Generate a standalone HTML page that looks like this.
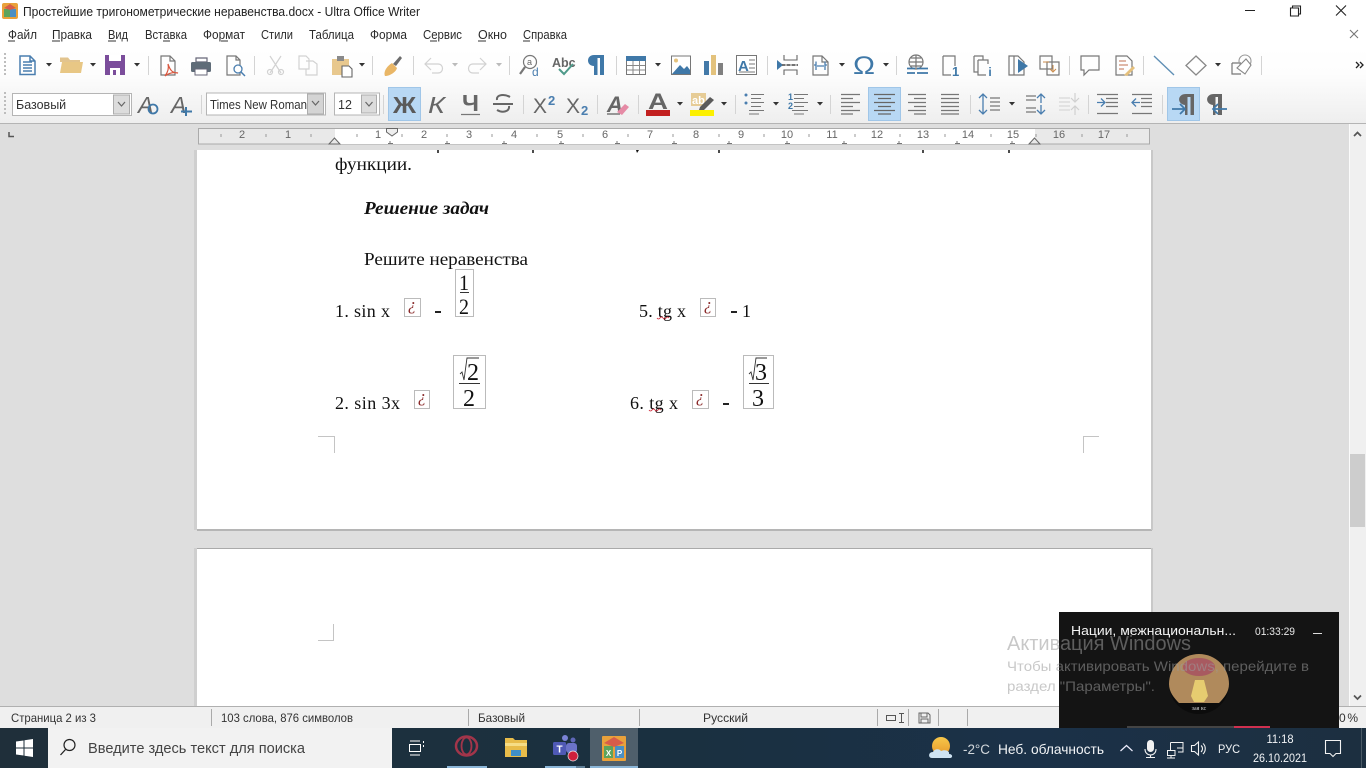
<!DOCTYPE html>
<html lang="ru"><head><meta charset="utf-8"><title>Ultra Office Writer</title>
<style>
html,body{margin:0;padding:0;width:1366px;height:768px;overflow:hidden;background:#dfdfdf}
svg{display:block;position:absolute;left:0;top:0}
text{font-family:"Liberation Sans",sans-serif;white-space:pre}
.m{font-size:12.5px;fill:#2b2b2b}
.d{font-family:"Liberation Serif",serif;font-size:18px;fill:#111}
.r{font-size:11px;fill:#666;text-anchor:middle}
.s{font-size:12px;fill:#333}
.t{fill:#f2f4f6}
.ln{stroke:#6a6a6a;fill:none;stroke-width:1.3}
.bl{stroke:#4a7eaf;fill:none;stroke-width:1.5}
.lt{stroke:#d2d2d2;fill:none;stroke-width:1.2}
.g{stroke:#777;fill:none;stroke-width:1.2}
.sep{stroke:#d4d4d4;stroke-width:1}
.ar{fill:#333}
.q{font-family:"Liberation Serif",serif;font-size:17px;font-style:italic;fill:#8a2a2a;text-anchor:middle}
</style></head><body>
<svg width="1366" height="768" viewBox="0 0 1366 768" xmlns="http://www.w3.org/2000/svg">
<defs>
<linearGradient id="tb" x1="0" y1="0" x2="0" y2="1"><stop offset="0" stop-color="#fff"/><stop offset=".35" stop-color="#fdfdfd"/><stop offset="1" stop-color="#eeeeee"/></linearGradient>
<linearGradient id="task" x1="0" y1="0" x2="1" y2="0"><stop offset="0" stop-color="#1f2f3a"/><stop offset=".5" stop-color="#1a3040"/><stop offset=".75" stop-color="#1b3148"/><stop offset="1" stop-color="#1c2f40"/></linearGradient>
<linearGradient id="sun" x1="0" y1="0" x2="0" y2="1"><stop offset="0" stop-color="#f7c74a"/><stop offset="1" stop-color="#e89a2c"/></linearGradient>
</defs>

<!-- window background -->
<rect x="0" y="0" width="1366" height="48" fill="#fff"/>
<rect x="0" y="48" width="1366" height="75" fill="url(#tb)"/>
<rect x="0" y="123" width="1366" height="1" fill="#b4b4b4"/>
<rect x="0" y="124" width="1349" height="583" fill="#dedede"/>

<!-- title bar -->
<g>
<rect x="2" y="3" width="16" height="16" rx="2" fill="#e9a13b"/>
<rect x="4" y="9" width="6" height="8" fill="#5ca35c"/>
<rect x="10" y="9" width="6" height="8" fill="#4a8fc4"/>
<path d="M4 8 L10 4 L16 8 L10 10Z" fill="#d65c4a"/>
</g>
<text x="23" y="16" font-size="13" fill="#222" textLength="397" lengthAdjust="spacingAndGlyphs">Простейшие тригонометрические неравенства.docx - Ultra Office Writer</text>
<path d="M1245 10.500H1255" stroke="#222" stroke-width="1"/>
<path d="M1290.500 8h8v8h-8zM1292.500 8v-2h8v8h-2" fill="none" stroke="#222" stroke-width="1.100"/>
<path d="M1336 5.500L1346 15.500M1346 5.500L1336 15.500" stroke="#222" stroke-width="1.100"/>

<!-- menu -->
<text class="m" x="8" y="39" textLength="29" lengthAdjust="spacingAndGlyphs">Файл</text><path d="M8 41h7" stroke="#333"/>
<text class="m" x="52" y="39" textLength="40" lengthAdjust="spacingAndGlyphs">Правка</text><path d="M52 41h8" stroke="#333"/>
<text class="m" x="108" y="39" textLength="20" lengthAdjust="spacingAndGlyphs">Вид</text><path d="M108 41h8" stroke="#333"/>
<text class="m" x="145" y="39" textLength="42" lengthAdjust="spacingAndGlyphs">Вставка</text><path d="M163 41h7" stroke="#333"/>
<text class="m" x="203" y="39" textLength="42" lengthAdjust="spacingAndGlyphs">Формат</text><path d="M221 41h7" stroke="#333"/>
<text class="m" x="261" y="39" textLength="32" lengthAdjust="spacingAndGlyphs">Стили</text>
<text class="m" x="309" y="39" textLength="45" lengthAdjust="spacingAndGlyphs">Таблица</text>
<text class="m" x="370" y="39" textLength="37" lengthAdjust="spacingAndGlyphs">Форма</text>
<text class="m" x="423" y="39" textLength="39" lengthAdjust="spacingAndGlyphs">Сервис</text><path d="M430 41h7" stroke="#333"/>
<text class="m" x="478" y="39" textLength="29" lengthAdjust="spacingAndGlyphs">Окно</text><path d="M478 41h8" stroke="#333"/>
<text class="m" x="523" y="39" textLength="44" lengthAdjust="spacingAndGlyphs">Справка</text><path d="M523 41h7" stroke="#333"/>
<path d="M1350 30L1358 38M1358 30L1350 38" stroke="#777" stroke-width="1.100"/>

<!-- toolbar 1 -->
<g fill="#bdbdbd"><rect x="4" y="53" width="2" height="2"/><rect x="4" y="57" width="2" height="2"/><rect x="4" y="61" width="2" height="2"/><rect x="4" y="65" width="2" height="2"/><rect x="4" y="69" width="2" height="2"/><rect x="4" y="73" width="2" height="2"/>
<rect x="4" y="92" width="2" height="2"/><rect x="4" y="96" width="2" height="2"/><rect x="4" y="100" width="2" height="2"/><rect x="4" y="104" width="2" height="2"/><rect x="4" y="108" width="2" height="2"/><rect x="4" y="112" width="2" height="2"/></g>
<path class="bl" d="M20 56H30L35 61V74.500H20ZM30 56V61H35M23 62H32M23 65H32M23 68H32M23 71H32" stroke-width="1.100"/>
<path class="ar" d="M46 63h6l-3 3.500z"/>
<path d="M60 62V57.500H68L70 60H80V62Z" fill="#e2c48e"/><path d="M60 73L62 62H83L81 73Z" fill="#e8c785"/>
<path class="ar" d="M90 63h6l-3 3.500z"/>
<path d="M105 55H125V75H105Z" fill="#7b4d9b"/><rect x="109" y="55" width="12" height="6" fill="#fff"/><rect x="110" y="68" width="10" height="7" fill="#fff"/><rect x="113" y="70" width="3" height="5" fill="#7b4d9b"/>
<path class="ar" d="M134 63h6l-3 3.500z"/>
<path class="sep" d="M148.500 56V75"/>
<path d="M161 56H170L175 61V75H161ZM170 56V61H175" fill="none" stroke="#777" stroke-width="1.200"/>
<path d="M168 64C170 70 172 73 178 73C174 72 169 73 165 76C168 72 169 68 168 64Z" fill="none" stroke="#d9573f" stroke-width="1.200"/>
<path d="M196 58H207V62H196Z" fill="#fff" stroke="#667" stroke-width="1.200"/><rect x="191" y="62" width="20" height="10" rx="1.500" fill="#5f6c78"/><rect x="195" y="69" width="12" height="6" fill="#fff" stroke="#667"/>
<path d="M227 56H236L240 60V75H227ZM236 56V60H240" class="g"/><circle cx="238" cy="69" r="4" fill="#fff" stroke="#4a7eaf" stroke-width="1.300"/><path d="M241 72L245 76" stroke="#4a7eaf" stroke-width="1.500"/>
<path class="sep" d="M254.500 56V75"/>
<path class="lt" d="M270 56L281 73M281 56L270 73"/><circle cx="270" cy="72" r="2.500" class="lt"/><circle cx="281" cy="72" r="2.500" class="lt"/>
<path class="lt" d="M299 56H306L309 59V69H299ZM306 61H313L317 64V75H306V69"/>
<path d="M332 59H349V75H332Z" fill="#e8c88e"/><rect x="337" y="56" width="7" height="5" fill="#8a8a8a"/><path d="M342 66H349L352 69V77H342Z" fill="#fff" stroke="#666" stroke-width="1.100"/>
<path class="ar" d="M359 63h6l-3 3.500z"/>
<path class="sep" d="M372.500 56V75"/>
<path d="M393 64L400 56L402 58L396 66Z" fill="#6c6c6c"/><path d="M385 76C383 72 387 66 392 63L397 68C396 72 390 76 385 76Z" fill="#e9b666"/>
<path class="sep" d="M413.500 56V75"/>
<path class="lt" d="M431 58L425 64L431 70M425 64H438C444 64 444 73 438 73H432" stroke-width="1.500"/>
<path d="M452 63h6l-3 3.500z" fill="#bbb"/>
<path class="lt" d="M480 58L486 64L480 70M486 64H473C467 64 467 73 473 73H479" stroke-width="1.500"/>
<path d="M496 63h6l-3 3.500z" fill="#bbb"/>
<path class="sep" d="M509.500 56V75"/>
<circle cx="530" cy="62" r="6.500" class="g"/><path d="M525 67L520 74" stroke="#777" stroke-width="2.200"/><text x="527" y="65" font-size="9" fill="#666">a</text><text x="532" y="76" font-size="12" fill="#4a7eaf">d</text>
<text x="552" y="67" font-size="12.500" font-weight="bold" fill="#666">Abc</text><path d="M559 69L564 74L573 64" fill="none" stroke="#4f9a8a" stroke-width="2"/>
<path d="M604 55H594C586 55 586 66 594 66V75H597.500V58H600V75H604Z" fill="#3f78a8"/>
<path class="sep" d="M616.500 56V75"/>
<g><rect x="626.500" y="56.500" width="19" height="18" fill="#fff" stroke="#777"/><rect x="626" y="56" width="20" height="5" fill="#3f78a8"/><path d="M633 61V74M639.500 61V74M627 65.500H645M627 70H645" stroke="#888"/></g>
<path class="ar" d="M655 63h6l-3 3.500z"/>
<g><rect x="671.500" y="56" width="19" height="18.500" fill="#fff" stroke="#777"/><path d="M672 74L680 65L684 69L687 66L690 70V74Z" fill="#3f78a8"/><circle cx="676" cy="60.500" r="2" fill="#e5c27c"/></g>
<rect x="704" y="61" width="5" height="14" fill="#4379a8"/><rect x="711" y="55" width="5" height="20" fill="#e3c27c"/><rect x="718" y="63" width="5" height="12" fill="#808080"/>
<rect x="736.500" y="55.500" width="20" height="19" fill="#fff" stroke="#777"/><text x="738" y="71" font-size="15" font-weight="bold" fill="#3f78a8">A</text><path d="M749 60H755M749 64H755M749 68H755M739 72H755" stroke="#777"/>
<path class="sep" d="M767.500 56V75"/>
<path d="M777 60L783 65L777 70Z" fill="#3f78a8"/><path d="M784 55V60H797V55M784 75V70H797V75M784 65H797" fill="none" stroke="#666" stroke-width="1.100"/><path d="M782 65H798" stroke="#444" stroke-dasharray="3 2" stroke-width="1.500"/>
<path class="g" d="M813 56H822L828 62V75H813ZM822 56V62H828"/><path d="M814 65H816M825 65H827M816 61.500V70M825 61.500V70M817 66H824" stroke="#4a7eaf" fill="none" stroke-width="1.300"/>
<path class="ar" d="M839 63h6l-3 3.500z"/>
<text x="853" y="74" font-size="25" fill="#3f78a8" textLength="22" lengthAdjust="spacingAndGlyphs">Ω</text>
<path class="ar" d="M883 63h6l-3 3.500z"/>
<path class="sep" d="M896.500 56V75"/>
<g class="g"><circle cx="916" cy="62" r="7" class="g"/><path class="g" d="M909 62H923M916 55V69M911 58H921M911 66H921" stroke-width=".9"/></g><path d="M907 68.500H915M917 68.500H928M907 73H915M917 73H928" stroke="#3f78a8" stroke-width="1.700"/>
<path class="g" d="M943 56H955V66M943 56V75H951"/><text x="952" y="76" font-size="13" font-weight="bold" fill="#3f78a8">1</text>
<path class="g" d="M974 56H983V60M974 56V72H978M978 60H988V64M978 60V75H986"/><text x="990" y="76" font-size="12" font-weight="bold" fill="#3f78a8" text-anchor="middle">i</text>
<path class="g" d="M1009 56H1018L1024 62V75H1009ZM1014 56V75"/><path d="M1018 59L1028 66L1018 73Z" fill="#3f78a8"/>
<path class="g" d="M1040 56H1052V69H1040ZM1047 62H1059V75H1047Z"/><path d="M1043 62H1049M1053 65V71M1050 69L1053 72L1056 69" stroke="#c98a4a" fill="none"/>
<path class="sep" d="M1069.500 56V75"/>
<path class="g" d="M1081 56H1099V70H1089L1084 75V70H1081Z"/>
<path class="g" d="M1116 56H1127L1132 61V75H1116Z"/><path d="M1119 61H1126M1119 65H1128M1119 69H1124" stroke="#c07050"/><path d="M1124 75L1133 66L1135 68L1127 76Z" fill="#e5c07c"/>
<path class="sep" d="M1143.500 56V75"/>
<path d="M1154 56L1174 75" stroke="#5f8fb5" stroke-width="1.400"/>
<path d="M1196 56L1206 65.500L1196 75L1186 65.500Z" fill="#fff" stroke="#888" stroke-width="1.300"/>
<path class="ar" d="M1215 63h6l-3 3.500z"/>
<path class="g" d="M1232 63H1241M1232 63V74H1241"/><circle cx="1245" cy="61" r="6" fill="none" stroke="#999" stroke-width="1.100"/><path d="M1241 64L1246 59L1251 65L1245 74L1237 68Z" fill="#fff" stroke="#888" stroke-width="1.100"/>
<path class="sep" d="M1261.500 56V75"/>
<path d="M1356 62L1359 65L1356 68M1360 62L1363 65L1360 68" fill="none" stroke="#222" stroke-width="1.300"/>

<!-- toolbar 2 -->
<rect x="12.500" y="93.500" width="119" height="22" fill="#fff" stroke="#b5b5b5"/>
<rect x="113.500" y="95" width="16" height="19" fill="#dcdcdc" stroke="#adadad"/><path d="M118 102L121.500 106L125 102" fill="none" stroke="#666" stroke-width="1.200"/>
<text x="16" y="109" font-size="12.500" fill="#333">Базовый</text>
<text x="138" y="113" font-size="23" font-style="italic" fill="#666">A</text><circle cx="153" cy="109" r="4.500" fill="none" stroke="#3f78a8" stroke-width="1.800"/>
<text x="171" y="113" font-size="23" font-style="italic" fill="#666">A</text><path d="M186 107V116M181 111.500H192" stroke="#3f78a8" stroke-width="2"/>
<path class="sep" d="M201.500 95V114"/>
<rect x="206.500" y="93" width="119" height="22" fill="#fff" stroke="#b5b5b5"/>
<rect x="307.500" y="94" width="16" height="20" fill="#d4d4d4" stroke="#adadad"/><path d="M312 101L315.500 105L319 101" fill="none" stroke="#666" stroke-width="1.200"/>
<text x="210" y="109" font-size="12.500" fill="#333" textLength="97" lengthAdjust="spacingAndGlyphs">Times New Roman</text>
<rect x="334.500" y="93" width="45" height="22" fill="#fff" stroke="#b5b5b5"/>
<rect x="361.500" y="95" width="15" height="18" fill="#dcdcdc" stroke="#adadad"/><path d="M365.500 102L369 106L372.500 102" fill="none" stroke="#666" stroke-width="1.200"/>
<text x="338" y="109" font-size="12.500" fill="#333">12</text>
<path class="sep" d="M383.500 95V114"/>
<rect x="388.500" y="87.500" width="32" height="33" fill="#b8d8f4" stroke="#a0c6e8"/>
<text x="393" y="113" font-size="23" font-weight="bold" fill="#5a5a5a" textLength="23" lengthAdjust="spacingAndGlyphs">Ж</text>
<text x="428" y="113" font-size="23" font-style="italic" fill="#666" textLength="17" lengthAdjust="spacingAndGlyphs">К</text>
<text x="462" y="111" font-size="23" fill="#666" textLength="17" lengthAdjust="spacingAndGlyphs" font-weight="bold">Ч</text><path d="M461 114.500H480" stroke="#777" stroke-width="1.300"/>
<path d="M510 97C505 94 496 94 497 100M493 104H513M497 110C502 113 510 112 509 106" fill="none" stroke="#666" stroke-width="2"/>
<path class="sep" d="M523.500 95V114"/>
<text x="533" y="113" font-size="21" fill="#666">X</text><text x="548" y="105" font-size="13" font-weight="bold" fill="#4a7eaf">2</text>
<text x="566" y="113" font-size="21" fill="#666">X</text><text x="581" y="115" font-size="13" font-weight="bold" fill="#4a7eaf">2</text>
<path class="sep" d="M597.500 95V114"/>
<text x="607" y="112" font-size="22" font-style="italic" font-weight="bold" fill="#666">A</text><path d="M607 114H620" stroke="#666" stroke-width="1.300"/><path d="M617 112L625 104L629 107L622 115Z" fill="#e58aa5"/>
<path class="sep" d="M638.500 95V114"/>
<text x="648" y="109" font-size="22" font-weight="bold" fill="#666" textLength="20" lengthAdjust="spacingAndGlyphs">A</text><rect x="646" y="110" width="24" height="6" fill="#c2201f"/>
<path class="ar" d="M677 102h6l-3 3.500z"/>
<rect x="691" y="93" width="15" height="13" fill="#e6cc96"/><text x="692" y="104" font-size="11" font-weight="bold" fill="#fff">ab</text><path d="M700 107L710 97L714 100L704 110L699 110Z" fill="#5a5a5a"/><rect x="690" y="110" width="24" height="6" fill="#fcf000"/>
<path class="ar" d="M721 102h6l-3 3.500z"/>
<path class="sep" d="M735.500 95V114"/>
<circle cx="746" cy="95" r="1.500" fill="#4a7eaf"/><circle cx="746" cy="103" r="1.500" fill="#4a7eaf"/><path d="M751 94.500H764M751 98.500H761M751 102.500H764M751 106.500H761M749 110.500H764M749 114H759" stroke="#777" stroke-width="1.100" fill="none"/>
<path class="ar" d="M773 102h6l-3 3.500z"/>
<text x="788" y="100" font-size="9" font-weight="bold" fill="#3f78a8">1</text><text x="788" y="109" font-size="9" font-weight="bold" fill="#3f78a8">2</text><path d="M794 94.500H808M794 98.500H804M794 102.500H808M794 106.500H804M792 110.500H808M794 114H804" stroke="#777" stroke-width="1.100" fill="none"/>
<path class="ar" d="M817 102h6l-3 3.500z"/>
<path class="sep" d="M830.500 95V114"/>
<path d="M841 94.500H860M841 98.500H853M841 102.500H860M841 106.500H853M841 110.500H860M841 114H853" stroke="#777" stroke-width="1.200"/>
<rect x="868.500" y="87.500" width="32" height="33" fill="#b8d8f4" stroke="#a0c6e8"/>
<path d="M874 94.500H895M878 98.500H891M874 102.500H895M878 106.500H891M874 110.500H895M878 114H891" stroke="#666" stroke-width="1.200"/>
<path d="M908 94.500H926M914 98.500H926M908 102.500H926M914 106.500H926M908 110.500H926M914 114H926" stroke="#777" stroke-width="1.200"/>
<path d="M941 94.500H959M941 98.500H959M941 102.500H959M941 106.500H959M941 110.500H959M941 114H959" stroke="#777" stroke-width="1.200"/>
<path class="sep" d="M970.500 95V114"/>
<path d="M983 94V114M979 98L983 94L987 98M979 110L983 114L987 110" fill="none" stroke="#4a7eaf" stroke-width="1.300"/><path d="M990 98H1000M990 102H1000M990 106H1000M990 110H1000" stroke="#777" stroke-width="1.200"/>
<path class="ar" d="M1009 102h6l-3 3.500z"/>
<path d="M1026 96H1036M1026 100H1036M1026 108H1036M1026 112H1036" stroke="#777" stroke-width="1.200"/><path d="M1041 94V103M1037 98L1041 94L1045 98M1041 105V114M1037 110L1041 114L1045 110" fill="none" stroke="#4a7eaf" stroke-width="1.300"/>
<path d="M1059 98H1070M1059 102H1070M1059 106H1070M1059 110H1070" stroke="#d8d8d8" stroke-width="1.200"/><path d="M1075 93V101M1071 98L1075 102L1079 98M1075 115V106M1071 110L1075 106L1079 110" fill="none" stroke="#d0d0d0" stroke-width="1.200"/>
<path class="sep" d="M1088.500 95V114"/>
<path d="M1097 94.500H1118M1106 98.500H1118M1106 102.500H1118M1106 106.500H1118M1097 113.500H1118" stroke="#777" stroke-width="1.200"/><path d="M1097 102.500H1104M1101 98.500L1105 102.500L1101 106.500" fill="none" stroke="#4a7eaf" stroke-width="1.300"/>
<path d="M1132 94.500H1152M1141 98.500H1152M1141 102.500H1152M1141 106.500H1152M1132 113.500H1152" stroke="#777" stroke-width="1.200"/><path d="M1140 102.500H1132M1136 98.500L1132 102.500L1136 106.500" fill="none" stroke="#4a7eaf" stroke-width="1.300"/>
<path class="sep" d="M1162.500 95V114"/>
<rect x="1167.500" y="87.500" width="32" height="33" fill="#b8d8f4" stroke="#a0c6e8"/>
<path d="M1194 94H1186C1177 94 1177 104 1185 105V115H1187.500V97H1190.500V115H1194Z" fill="#666"/><path d="M1172 109H1185M1180 104L1185 109L1180 114" fill="none" stroke="#3f78a8" stroke-width="1.700"/>
<path d="M1222 94H1214C1205 94 1205 104 1213 105V115H1215.500V97H1218V115H1222Z" fill="#666"/><path d="M1227 109H1213M1218 104L1213 109L1218 114" fill="none" stroke="#3f78a8" stroke-width="1.700"/>

<!-- ruler corner + ruler -->
<path d="M9 132V136.500H14" fill="none" stroke="#555" stroke-width="1.500"/>
<rect x="198.500" y="128.500" width="951" height="15.500" fill="#e9e9e9" stroke="#aaa"/>
<rect x="335" y="129" width="700" height="15" fill="#fff"/>
<g>
<text class="r" x="242" y="138">2</text><text class="r" x="288" y="138">1</text>
<text class="r" x="378" y="138">1</text><text class="r" x="424" y="138">2</text><text class="r" x="469" y="138">3</text><text class="r" x="514" y="138">4</text><text class="r" x="560" y="138">5</text><text class="r" x="605" y="138">6</text><text class="r" x="650" y="138">7</text><text class="r" x="696" y="138">8</text><text class="r" x="741" y="138">9</text><text class="r" x="787" y="138">10</text><text class="r" x="832" y="138">11</text><text class="r" x="877" y="138">12</text><text class="r" x="923" y="138">13</text><text class="r" x="968" y="138">14</text><text class="r" x="1013" y="138">15</text><text class="r" x="1059" y="138">16</text><text class="r" x="1104" y="138">17</text>
</g>
<path d="M221 134v3M266 134v3M311 134v3M357 134v3M402 134v3M447 134v3M492 134v3M537 134v3M583 134v3M628 134v3M673 134v3M719 134v3M764 134v3M809 134v3M855 134v3M900 134v3M945 134v3M991 134v3M1036 134v3M1082 134v3M1127 134v3" stroke="#999"/>
<path d="M390 141v3M388 143.500h5M447 141v3M445 143.500h5M504 141v3M502 143.500h5M561 141v3M559 143.500h5M617 141v3M615 143.500h5M674 141v3M672 143.500h5M729 141v3M727 143.500h5M787 141v3M785 143.500h5M844 141v3M842 143.500h5M899 141v3M897 143.500h5M957 141v3M955 143.500h5M1012 141v3M1010 143.500h5" stroke="#777"/>
<path d="M329 144L334.500 138L340 144Z" fill="#e8e8e8" stroke="#666"/>
<path d="M386.500 128.500H397.500V132L392 136L386.500 132Z" fill="#eee" stroke="#666"/>
<path d="M1029 144L1034.500 138L1040 144Z" fill="#e8e8e8" stroke="#666"/>

<!-- pages -->
<rect x="194" y="150" width="3" height="380" fill="#cfcfcf"/>
<rect x="197" y="529" width="955" height="2" fill="#b5b5b5"/>
<rect x="1151" y="150" width="2" height="380" fill="#c8c8c8"/>
<rect x="197" y="150" width="954" height="379" fill="#fff"/>
<rect x="194" y="548" width="3" height="159" fill="#cfcfcf"/>
<rect x="197" y="548" width="955" height="1" fill="#aaa"/>
<rect x="1151" y="548" width="2" height="159" fill="#c8c8c8"/>
<rect x="197" y="549" width="954" height="158" fill="#fff"/>

<!-- clipped descenders of line above -->
<path d="M438 150v3M533 150v3M719 150v3M923 150v3M1009 150v3" stroke="#111" stroke-width="1.500"/><path d="M636 150h3l-2 3z" fill="#111"/>

<!-- doc text -->
<text class="d" x="335" y="170" textLength="77" lengthAdjust="spacingAndGlyphs">функции.</text>
<text class="d" x="364" y="214" font-weight="bold" font-style="italic" textLength="125" lengthAdjust="spacingAndGlyphs">Решение задач</text>
<text class="d" x="364" y="265" textLength="164" lengthAdjust="spacingAndGlyphs">Решите неравенства</text>

<text class="d" x="335" y="317" textLength="55" lengthAdjust="spacing">1. sin x</text>
<rect x="404.500" y="298.500" width="16" height="18" fill="#fff" stroke="#bbb"/><text class="q" x="412" y="310">¿</text>
<rect x="435" y="311" width="6" height="2" fill="#222"/>
<rect x="455.500" y="269.500" width="18" height="47" fill="#fff" stroke="#bbb"/>
<text class="d" x="459" y="290" font-size="22" textLength="10" lengthAdjust="spacingAndGlyphs" style="font-size:22px">1</text><path d="M460 292.500H469" stroke="#333"/><text class="d" x="459" y="314" textLength="10" lengthAdjust="spacingAndGlyphs" style="font-size:22px">2</text>

<text class="d" x="639" y="317" textLength="47" lengthAdjust="spacing">5. tg x</text>
<path d="M657 318q1.500 2 3 0t3 0t3 0t3 0" fill="none" stroke="#c23" stroke-width=".8"/>
<rect x="700.500" y="298.500" width="15" height="18" fill="#fff" stroke="#bbb"/><text class="q" x="708" y="310">¿</text>
<rect x="731" y="311" width="6" height="2" fill="#222"/><text class="d" x="742" y="317">1</text>

<text class="d" x="335" y="409" textLength="65" lengthAdjust="spacing">2. sin 3x</text>
<rect x="414.500" y="390.500" width="15" height="18" fill="#fff" stroke="#bbb"/><text class="q" x="422" y="402">¿</text>
<rect x="453.500" y="355.500" width="32" height="53" fill="#fff" stroke="#bbb"/>
<path d="M460 374L462 372L464 380L467 358H479" fill="none" stroke="#333" stroke-width=".9"/><text class="d" x="467" y="380" textLength="12" lengthAdjust="spacingAndGlyphs" style="font-size:24px">2</text><path d="M459 383.500H480" stroke="#333"/><text class="d" x="463" y="406" textLength="12" lengthAdjust="spacingAndGlyphs" style="font-size:24px">2</text>

<text class="d" x="630" y="409" textLength="48" lengthAdjust="spacing">6. tg x</text>
<path d="M649 410q1.500 2 3 0t3 0t3 0t3 0" fill="none" stroke="#c23" stroke-width=".8"/>
<rect x="692.500" y="390.500" width="16" height="18" fill="#fff" stroke="#bbb"/><text class="q" x="700" y="402">¿</text>
<rect x="723" y="403" width="6" height="2" fill="#222"/>
<rect x="743.500" y="355.500" width="30" height="53" fill="#fff" stroke="#bbb"/>
<path d="M749 374L751 372L753 380L756 358H767" fill="none" stroke="#333" stroke-width=".9"/><text class="d" x="755" y="380" textLength="12" lengthAdjust="spacingAndGlyphs" style="font-size:24px">3</text><path d="M749 383.500H769" stroke="#333"/><text class="d" x="752" y="406" textLength="12" lengthAdjust="spacingAndGlyphs" style="font-size:24px">3</text>

<!-- crop marks -->
<path d="M318 436.500H334.500V453M1099 436.500H1083.500V453M318 640.500H333.500V624" fill="none" stroke="#c4c4c4"/>

<!-- scrollbar -->
<rect x="1349" y="124" width="17" height="583" fill="#f0f0f0"/>
<rect x="1349" y="124" width="1" height="583" fill="#fbfbfb"/>
<rect x="1350" y="454" width="15" height="73" fill="#cdcdcd"/>
<path d="M1354 136L1357.500 132.500L1361 136" fill="none" stroke="#555" stroke-width="1.700"/>
<path d="M1354 695.500L1357.500 699L1361 695.500" fill="none" stroke="#555" stroke-width="1.700"/>

<!-- status bar -->
<rect x="0" y="706" width="1366" height="1" fill="#b0b0b0"/>
<rect x="0" y="707" width="1366" height="21" fill="#f0f0f0"/>
<text class="s" x="11" y="722" textLength="85" lengthAdjust="spacingAndGlyphs">Страница 2 из 3</text>
<path d="M211.500 709V726M468.500 709V726M639.500 709V726M877.500 709V726M908.500 709V726M938.500 709V726M967.500 709V726" stroke="#aaa"/>
<text class="s" x="221" y="722" textLength="132" lengthAdjust="spacingAndGlyphs">103 слова, 876 символов</text>
<text class="s" x="478" y="722" textLength="47" lengthAdjust="spacingAndGlyphs">Базовый</text>
<text class="s" x="703" y="722" textLength="45" lengthAdjust="spacingAndGlyphs">Русский</text>
<rect x="886.500" y="715.500" width="9" height="5" fill="none" stroke="#555"/><path d="M899 713.500h5M899 722.500h5M901.500 713.500V722.500" stroke="#555" fill="none"/>
<path d="M919 713H928L930 715V723H919ZM921 713V717H927V713M921 723V719H928V723" fill="none" stroke="#666"/>
<text class="s" x="1339" y="722" font-size="12" textLength="19" lengthAdjust="spacing">0 %</text>

<!-- video overlay -->
<rect x="1059" y="612" width="280" height="116" fill="#141414"/>
<text x="1071" y="635" font-size="13" fill="#f4f4f4" textLength="165" lengthAdjust="spacingAndGlyphs">Нации, межнациональн...</text>
<text x="1255" y="635" font-size="11" fill="#e8e8e8" textLength="40" lengthAdjust="spacingAndGlyphs">01:33:29</text>
<path d="M1313 633.500H1322" stroke="#ddd"/>
<circle cx="1199" cy="684" r="30" fill="#0c0c0c"/>
<path d="M1169 684A30 30 0 0 1 1229 684C1229 692 1224 698 1219 703H1179C1174 698 1169 692 1169 684Z" fill="#b08a5c"/>
<ellipse cx="1199" cy="667" rx="16" ry="9" fill="#a85a60"/>
<path d="M1195 680H1204L1208 696L1204 702H1194L1191 696Z" fill="#e6cc70"/>
<text x="1199" y="710" font-size="6" fill="#ccc" text-anchor="middle" style="font-family:'Liberation Serif',serif">зая кс</text>
<rect x="1127" y="726" width="107" height="2" fill="#444"/><rect x="1234" y="726" width="36" height="2" fill="#d0304f"/>

<!-- watermark -->
<text x="1007" y="650" font-size="20" fill="#9a9a9a" fill-opacity=".55" textLength="184" lengthAdjust="spacingAndGlyphs">Активация Windows</text>
<text x="1007" y="671" font-size="14" fill="#9a9a9a" fill-opacity=".55" textLength="302" lengthAdjust="spacingAndGlyphs">Чтобы активировать Windows, перейдите в</text>
<text x="1007" y="691" font-size="14" fill="#9a9a9a" fill-opacity=".55" textLength="148" lengthAdjust="spacingAndGlyphs">раздел "Параметры".</text>

<!-- taskbar -->
<rect x="0" y="728" width="1366" height="40" fill="url(#task)"/>
<path d="M16 741.500L23.500 740.500V747.500H16ZM24.500 740.300L33 739V747.500H24.500ZM16 748.500H23.500V755.500L16 754.500ZM24.500 748.500H33V757L24.500 755.700Z" fill="#fff"/>
<rect x="48" y="728" width="344" height="40" fill="#f2f2f2"/>
<circle cx="69.500" cy="745" r="5.500" fill="none" stroke="#222" stroke-width="1.200"/><path d="M65.500 749.500L60.500 755" stroke="#222" stroke-width="1.300"/>
<text x="88" y="753" font-size="14.500" fill="#444" textLength="217" lengthAdjust="spacingAndGlyphs">Введите здесь текст для поиска</text>
<path d="M410 741H420M410 755H420M409.500 744.500H420.500V751.500H409.500Z" fill="none" stroke="#fff" stroke-width="1"/><path d="M423.500 741V743M423.500 745V747" stroke="#fff" stroke-width="1"/>
<ellipse cx="466.500" cy="746" rx="10.500" ry="9.500" fill="none" stroke="#a2354a" stroke-width="2.500"/><ellipse cx="466.500" cy="746" rx="5" ry="8.500" fill="none" stroke="#a2354a" stroke-width="1.800"/>
<path d="M505 738H513L515 740H527V757H505Z" fill="#e8bc4a"/><rect x="505" y="743" width="22" height="3" fill="#f6dd86"/><rect x="511" y="750" width="10" height="6" fill="#3f8fc8"/>
<rect x="553" y="742" width="13" height="13" rx="1.500" fill="#4f59b5"/><text x="559.500" y="752.500" font-size="10" font-weight="bold" fill="#fff" text-anchor="middle">T</text><circle cx="565" cy="738" r="3" fill="#7b83d6"/><circle cx="573" cy="740" r="2.500" fill="#5f67b8"/><rect x="566" y="743" width="11" height="10" rx="3" fill="#6b73c8"/><circle cx="573" cy="756" r="5" fill="#d0203c" stroke="#e8e8e8" stroke-width=".7"/>
<rect x="590" y="728" width="48" height="40" fill="#4f5f6b"/>
<rect x="602" y="736" width="24" height="25" rx="1" fill="#e9a13b"/><rect x="604" y="746" width="9" height="12" fill="#5ca35c"/><rect x="615" y="746" width="9" height="12" fill="#4a8fc4"/><path d="M604 743L614 737L624 743L614 747Z" fill="#d65c4a"/><text x="608.500" y="756" font-size="8" font-weight="bold" fill="#fff" text-anchor="middle">X</text><text x="619.500" y="756" font-size="8" font-weight="bold" fill="#fff" text-anchor="middle">P</text>
<rect x="447" y="766" width="40" height="2" fill="#8bb6d8"/><rect x="545" y="766" width="31" height="2" fill="#8bb6d8"/><rect x="576" y="766" width="9" height="2" fill="#5f7f97"/><rect x="590" y="766" width="48" height="2" fill="#8bb6d8"/>

<!-- tray -->
<circle cx="941" cy="746" r="9" fill="url(#sun)"/><path d="M932 758C928 758 928 752 933 752C934 749 939 748 941 751C945 749 950 751 949 754C953 754 953 758 950 758Z" fill="#cfe3f2"/>
<text class="t" x="963" y="754" font-size="13.500" textLength="27" lengthAdjust="spacingAndGlyphs" fill-opacity=".85">-2°C</text>
<text class="t" x="998" y="754" font-size="14" textLength="106" lengthAdjust="spacingAndGlyphs">Неб. облачность</text>
<path d="M1120.500 751L1126.500 745.500L1132.500 751" fill="none" stroke="#eef" stroke-width="1.200"/>
<rect x="1147" y="740" width="7" height="12" rx="3.500" fill="#f2f2f2"/><path d="M1145 749C1145 757 1156 757 1156 749M1150.500 755V757M1146 757.500H1155" fill="none" stroke="#f2f2f2" stroke-width="1.100"/>
<path d="M1170.500 742.500H1183V752H1178M1170.500 742.500V750M1167.500 750.500H1175V755.500H1167.500ZM1171 755.500V758M1167 758H1175M1177 748H1183" fill="none" stroke="#f2f2f2" stroke-width="1"/>
<path d="M1191.500 745.500H1194.500L1198.500 742V755L1194.500 751.500H1191.500ZM1201 745.500C1203 747 1203 750 1201 752M1203 743.500C1206 746 1206 751 1203 754" fill="none" stroke="#f2f2f2" stroke-width="1.100"/>
<text class="t" x="1218" y="753" font-size="12" textLength="22" lengthAdjust="spacingAndGlyphs">РУС</text>
<text class="t" x="1280" y="743" font-size="12" text-anchor="middle" textLength="27" lengthAdjust="spacingAndGlyphs">11:18</text>
<text class="t" x="1253" y="762" font-size="12" textLength="54" lengthAdjust="spacingAndGlyphs">26.10.2021</text>
<path d="M1325.500 740.500H1340.500V753.500H1336L1333 756.500L1330 753.500H1325.500Z" fill="none" stroke="#f2f2f2" stroke-width="1.100"/>
<rect x="1361" y="728" width="1" height="40" fill="#4a5a66"/>
</svg>
</body></html>
